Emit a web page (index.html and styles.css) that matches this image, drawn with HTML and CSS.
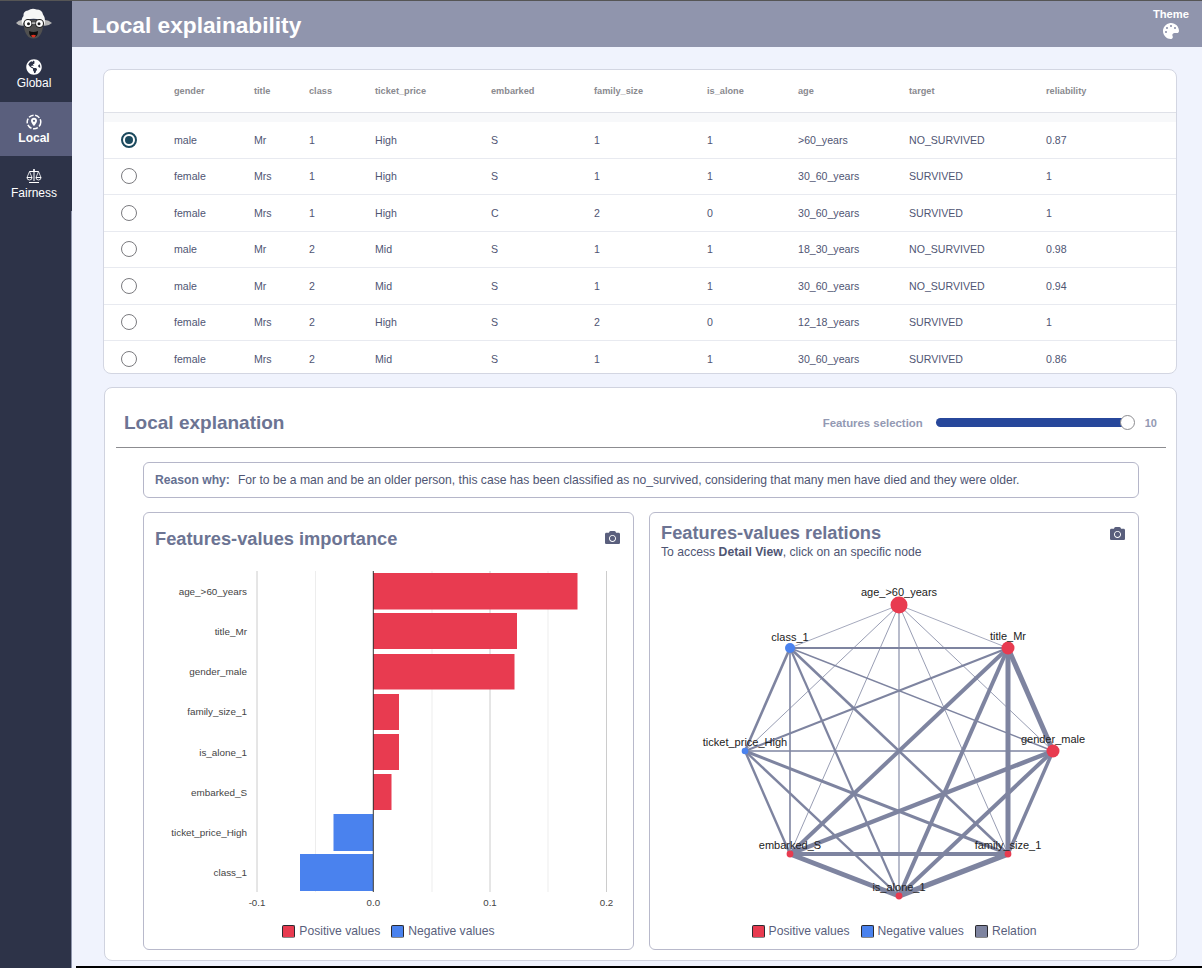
FILE: index.html
```html
<!DOCTYPE html>
<html lang="en">
<head>
<meta charset="utf-8">
<title>Local explainability</title>
<link rel="stylesheet" href="styles.css">
</head>
<body>
<div class="app">
  <aside class="sidebar">
    <div class="logo">
      <svg width="40" height="34" viewBox="0 0 40 34">
        <path d="M9 13 Q5 12.500 2 16 Q5 19.500 10 18.500 Z" fill="#b5b5b5"/>
        <path d="M30 13 Q34 12.500 38 16 Q34 19.500 29 18.500 Z" fill="#b5b5b5"/>
        <path d="M9.500 13 Q9.500 26 14.500 30 Q19.500 33 24.500 30 Q29.500 26 29.500 13 Z" fill="#505050"/>
        <path d="M8.500 18 Q6.500 12 9.500 9 Q9 4 14 3.500 Q18 0.500 22.500 2.500 Q28 2.500 29 7.500 Q32 11.500 30.500 18 Q29 14 26 13 Q19.500 10.500 13 13 Q10 14 8.500 18 Z" fill="#f6f6f6"/>
        <circle cx="14" cy="16.500" r="4" fill="#fff" stroke="#1d1d1d" stroke-width="1.100"/>
        <circle cx="25.500" cy="16.500" r="4" fill="#fff" stroke="#1d1d1d" stroke-width="1.100"/>
        <rect x="18" y="15.500" width="3.500" height="1.200" fill="#e6e6e6"/>
        <circle cx="14.500" cy="16.800" r="1.500" fill="#1d1d1d"/>
        <circle cx="25" cy="16.800" r="1.500" fill="#1d1d1d"/>
        <path d="M15 24 Q19.500 26 24 24 Q24 30 19.500 30 Q15 30 15 24 Z" fill="#0f0f0f"/>
        <path d="M17 28.500 Q19.500 26.800 22 28.500 Q21 30.500 19.500 30.500 Q18 30.500 17 28.500 Z" fill="#e0301e"/>
      </svg>
    </div>
    <nav class="nav">
      <a class="nav-item">
        <svg class="nav-icon" width="16" height="16" viewBox="0 0 496 512"><path fill="#fff" d="M248 8C111.03 8 0 119.03 0 256s111.03 248 248 248 248-111.03 248-248S384.97 8 248 8zm82.29 357.6c-3.9 3.88-7.99 7.95-11.31 11.28-2.99 3-5.1 6.7-6.17 10.71-1.51 5.66-2.73 11.38-4.77 16.87l-17.39 46.85c-13.76 3-28 4.69-42.65 4.69v-27.38c1.69-12.62-7.64-36.26-22.63-51.25-6-6-9.37-14.14-9.37-22.63v-32.01c0-11.64-6.27-22.34-16.46-27.97-14.37-7.95-34.81-19.06-48.81-26.11-11.48-5.78-22.1-13.14-31.65-21.75l-.8-.72a114.792 114.792 0 0 1-18.06-20.74c-9.38-13.77-24.66-36.42-34.59-51.14 20.47-45.5 57.36-82.04 103.2-101.89l24.01 12.01C203.48 89.74 216 82.01 216 70.11v-11.3c7.99-1.29 16.12-2.11 24.39-2.42l28.3 28.3c6.25 6.25 6.25 16.38 0 22.63L264 112l-10.34 10.34c-3.12 3.12-3.12 8.19 0 11.31l4.69 4.69c3.12 3.12 3.12 8.19 0 11.31l-8 8a8.008 8.008 0 0 1-5.66 2.34h-8.99c-2.08 0-4.08.81-5.58 2.27l-9.92 9.65a8.008 8.008 0 0 0-1.58 9.31l15.59 31.19c2.66 5.32-1.21 11.58-7.15 11.58h-5.64c-1.93 0-3.79-.7-5.24-1.96l-9.28-8.06a16.017 16.017 0 0 0-15.55-3.1l-31.17 10.39a11.95 11.95 0 0 0-8.17 11.34c0 4.53 2.56 8.66 6.61 10.69l11.08 5.54c9.41 4.71 19.79 7.16 30.31 7.16s22.59 27.29 32 32h66.75c8.49 0 16.62 3.37 22.63 9.37l13.69 13.69a30.503 30.503 0 0 1 8.93 21.57 46.536 46.536 0 0 1-13.72 32.98zM417 274.25c-5.79-1.45-10.84-5-14.15-9.97l-17.98-26.97a23.97 23.97 0 0 1 0-26.62l19.59-29.38c2.32-3.47 5.5-6.29 9.24-8.15l12.98-6.49C440.2 193.59 448 223.87 448 256c0 8.67-.74 17.16-1.82 25.54L417 274.25z"/></svg>
        <span>Global</span>
      </a>
      <a class="nav-item nav-item-active">
        <svg class="nav-icon" width="16" height="16" viewBox="0 0 16 16">
          <circle cx="8" cy="8" r="6.800" fill="none" stroke="#fff" stroke-width="1.500" stroke-dasharray="5 1.600"/>
          <path fill="#fff" d="M8 3.800c-1.800 0-3 1.300-3 2.900 0 2 3 5.300 3 5.300s3-3.300 3-5.300c0-1.600-1.200-2.900-3-2.900z"/>
          <circle cx="8" cy="6.800" r="1.100" fill="#5a5f7d"/>
        </svg>
        <span>Local</span>
      </a>
      <a class="nav-item nav-item-last">
        <svg class="nav-icon" width="16" height="16" viewBox="0 0 16 16" fill="none" stroke="#fff" stroke-width="1">
          <path d="M8 1.500V13M3 14.500h10M3.500 3.500h9"/>
          <circle cx="8" cy="2" r="1" fill="#fff" stroke="none"/>
          <path d="M3.500 3.500L1 9.500h5zM12.500 3.500L10 9.500h5z" stroke-width=".8"/>
          <path d="M1 9.500a2.500 2.500 0 0 0 5 0zM10 9.500a2.500 2.500 0 0 0 5 0z" stroke-width=".9"/>
        </svg>
        <span>Fairness</span>
      </a>
    </nav>
  </aside>

  <main class="main">
    <header class="topbar">
      <h1 class="page-title">Local explainability</h1>
      <div class="theme">
        <span>Theme</span>
        <svg width="16" height="16" viewBox="0 0 512 512"><path fill="#fff" d="M204.3 5C104.9 24.4 24.8 104.3 5.2 203.4c-37 187 131.7 326.4 258.8 306.7 41.2-6.4 61.4-54.6 42.5-91.7-23.1-45.4 9.9-98.4 60.9-98.4h79.7c35.8 0 64.8-29.6 64.9-65.3C511.5 97.1 368.1-26.9 204.3 5zM96 320c-17.7 0-32-14.3-32-32s14.3-32 32-32 32 14.3 32 32-14.3 32-32 32zm32-128c-17.7 0-32-14.3-32-32s14.3-32 32-32 32 14.3 32 32-14.3 32-32 32zm128-64c-17.7 0-32-14.3-32-32s14.3-32 32-32 32 14.3 32 32-14.3 32-32 32zm128 64c-17.7 0-32-14.3-32-32s14.3-32 32-32 32 14.3 32 32-14.3 32-32 32z"/></svg>
      </div>
    </header>

    <div class="content">
      <section class="table-card">
        <div class="row row-head">
          <span></span><span>gender</span><span>title</span><span>class</span><span>ticket_price</span><span>embarked</span><span>family_size</span><span>is_alone</span><span>age</span><span>target</span><span>reliability</span>
        </div>
        <div class="strip"></div>
        <div class="row"><span class="radio radio-on"></span><span>male</span><span>Mr</span><span>1</span><span>High</span><span>S</span><span>1</span><span>1</span><span>&gt;60_years</span><span>NO_SURVIVED</span><span>0.87</span></div>
        <div class="row"><span class="radio"></span><span>female</span><span>Mrs</span><span>1</span><span>High</span><span>S</span><span>1</span><span>1</span><span>30_60_years</span><span>SURVIVED</span><span>1</span></div>
        <div class="row"><span class="radio"></span><span>female</span><span>Mrs</span><span>1</span><span>High</span><span>C</span><span>2</span><span>0</span><span>30_60_years</span><span>SURVIVED</span><span>1</span></div>
        <div class="row"><span class="radio"></span><span>male</span><span>Mr</span><span>2</span><span>Mid</span><span>S</span><span>1</span><span>1</span><span>18_30_years</span><span>NO_SURVIVED</span><span>0.98</span></div>
        <div class="row"><span class="radio"></span><span>male</span><span>Mr</span><span>2</span><span>Mid</span><span>S</span><span>1</span><span>1</span><span>30_60_years</span><span>NO_SURVIVED</span><span>0.94</span></div>
        <div class="row"><span class="radio"></span><span>female</span><span>Mrs</span><span>2</span><span>High</span><span>S</span><span>2</span><span>0</span><span>12_18_years</span><span>SURVIVED</span><span>1</span></div>
        <div class="row"><span class="radio"></span><span>female</span><span>Mrs</span><span>2</span><span>Mid</span><span>S</span><span>1</span><span>1</span><span>30_60_years</span><span>SURVIVED</span><span>0.86</span></div>
      </section>

      <section class="explain-card">
        <div class="explain-head">
          <h2 class="explain-title">Local explanation</h2>
          <div class="slider-group">
            <span class="slider-label">Features selection</span>
            <div class="slider"><div class="slider-thumb"></div></div>
            <span class="slider-value">10</span>
          </div>
        </div>
        <div class="explain-body">
          <p class="reason"><b class="reason-lead">Reason why:</b>For to be a man and be an older person, this case has been classified as no_survived, considering that many men have died and they were older.</p>
          <div class="panels">
            <article class="panel">
              <div class="panel-head panel-head-left">
                <h3 class="panel-title">Features-values importance</h3>
                <svg class="camera" width="15" height="15" viewBox="0 0 512 512"><path d="M512 144v288c0 26.5-21.5 48-48 48H48c-26.5 0-48-21.5-48-48V144c0-26.5 21.5-48 48-48h88l12.3-32.9c7-18.7 24.9-31.1 44.9-31.1h125.5c20 0 37.9 12.4 44.9 31.1L376 96h88c26.5 0 48 21.5 48 48zM376 288c0-66.2-53.8-120-120-120s-120 53.8-120 120 53.8 120 120 120 120-53.8 120-120zm-32 0c0 48.5-39.5 88-88 88s-88-39.5-88-88 39.5-88 88-88 88 39.5 88 88z"/></svg>
              </div>
              <svg class="chart" width="489" height="356" viewBox="144 561 489 356">
                <g class="grid-minor"><path d="M315.500 571V892M432 571V892M548 571V892"/></g>
                <g class="grid-major"><path d="M257 571V892M490 571V892M606.500 571V892"/></g>
                <g class="bar-pos">
                  <rect x="373" y="573" width="204.500" height="36.500"/>
                  <rect x="373" y="613" width="144" height="36"/>
                  <rect x="373" y="654" width="141.500" height="35.500"/>
                  <rect x="373" y="694" width="26" height="36"/>
                  <rect x="373" y="734" width="26" height="36"/>
                  <rect x="373" y="774" width="18.500" height="36"/>
                </g>
                <g class="bar-neg">
                  <rect x="333.500" y="814" width="39.500" height="37"/>
                  <rect x="300" y="854" width="73" height="37"/>
                </g>
                <path class="axis" d="M373.300 571V892"/>
                <g class="bar-label">
                  <text x="247" y="594.500">age_&gt;60_years</text>
                  <text x="247" y="634.500">title_Mr</text>
                  <text x="247" y="674.500">gender_male</text>
                  <text x="247" y="714.500">family_size_1</text>
                  <text x="247" y="755.500">is_alone_1</text>
                  <text x="247" y="795.500">embarked_S</text>
                  <text x="247" y="835.500">ticket_price_High</text>
                  <text x="247" y="875.500">class_1</text>
                </g>
                <g class="tick-label">
                  <text x="257" y="906">-0.1</text>
                  <text x="373.300" y="906">0.0</text>
                  <text x="490" y="906">0.1</text>
                  <text x="606.500" y="906">0.2</text>
                </g>
              </svg>
              <div class="legend">
                <span class="legend-item"><i class="swatch swatch-pos"></i>Positive values</span>
                <span class="legend-item"><i class="swatch swatch-neg"></i>Negative values</span>
              </div>
            </article>

            <article class="panel">
              <div class="panel-head panel-head-right">
                <div>
                  <h3 class="panel-title">Features-values relations</h3>
                  <p class="panel-sub">To access <b>Detail View</b>, click on an specific node</p>
                </div>
                <svg class="camera" width="15" height="15" viewBox="0 0 512 512"><path d="M512 144v288c0 26.5-21.5 48-48 48H48c-26.5 0-48-21.5-48-48V144c0-26.5 21.5-48 48-48h88l12.3-32.9c7-18.7 24.9-31.1 44.9-31.1h125.5c20 0 37.9 12.4 44.9 31.1L376 96h88c26.5 0 48 21.5 48 48zM376 288c0-66.2-53.8-120-120-120s-120 53.8-120 120 53.8 120 120 120 120-53.8 120-120zm-32 0c0 48.5-39.5 88-88 88s-88-39.5-88-88 39.5-88 88-88 88 39.5 88 88z"/></svg>
              </div>
              <svg class="chart" width="488" height="356" viewBox="650 561 488 356">
                <g class="edge">
                  <line x1="899" y1="605" x2="1008" y2="648" stroke-width=".7"/>
                  <line x1="899" y1="605" x2="790" y2="648" stroke-width=".7"/>
                  <line x1="899" y1="605" x2="1053" y2="751" stroke-width=".8"/>
                  <line x1="899" y1="605" x2="1008" y2="854" stroke-width=".8"/>
                  <line x1="899" y1="605" x2="899" y2="896" stroke-width="1.100"/>
                  <line x1="899" y1="605" x2="790" y2="854" stroke-width=".8"/>
                  <line x1="899" y1="605" x2="745" y2="751" stroke-width=".8"/>
                  <line x1="790" y1="648" x2="1008" y2="648" stroke-width="2.200"/>
                  <line x1="790" y1="648" x2="745" y2="751" stroke-width="2.600"/>
                  <line x1="790" y1="648" x2="790" y2="854" stroke-width="1.600"/>
                  <line x1="790" y1="648" x2="899" y2="896" stroke-width="2.200"/>
                  <line x1="790" y1="648" x2="1008" y2="854" stroke-width="2.600"/>
                  <line x1="790" y1="648" x2="1053" y2="751" stroke-width="1.400"/>
                  <line x1="1008" y1="648" x2="1053" y2="751" stroke-width="5"/>
                  <line x1="1008" y1="648" x2="1008" y2="854" stroke-width="5"/>
                  <line x1="1008" y1="648" x2="899" y2="896" stroke-width="4"/>
                  <line x1="1008" y1="648" x2="790" y2="854" stroke-width="4"/>
                  <line x1="1008" y1="648" x2="745" y2="751" stroke-width="2.200"/>
                  <line x1="1053" y1="751" x2="1008" y2="854" stroke-width="3.500"/>
                  <line x1="1053" y1="751" x2="899" y2="896" stroke-width="4"/>
                  <line x1="1053" y1="751" x2="790" y2="854" stroke-width="4.500"/>
                  <line x1="1053" y1="751" x2="745" y2="751" stroke-width="1.600"/>
                  <line x1="745" y1="751" x2="1008" y2="854" stroke-width="3"/>
                  <line x1="745" y1="751" x2="899" y2="896" stroke-width="2.400"/>
                  <line x1="745" y1="751" x2="790" y2="854" stroke-width="2.400"/>
                  <line x1="1008" y1="854" x2="899" y2="896" stroke-width="5.500"/>
                  <line x1="1008" y1="854" x2="790" y2="854" stroke-width="4"/>
                  <line x1="899" y1="896" x2="790" y2="854" stroke-width="5"/>
                </g>
                <g class="node-pos">
                  <circle cx="899" cy="605" r="8.500"/>
                  <circle cx="1008" cy="648" r="6.500"/>
                  <circle cx="1053" cy="751" r="6.500"/>
                  <circle cx="1008" cy="854" r="3.400"/>
                  <circle cx="899" cy="896" r="3.400"/>
                  <circle cx="790" cy="854" r="3.400"/>
                </g>
                <g class="node-neg">
                  <circle cx="745" cy="751" r="3.300"/>
                  <circle cx="790" cy="648" r="5"/>
                </g>
                <g class="node-label">
                  <text x="899" y="596">age_&gt;60_years</text>
                  <text x="1008" y="640">title_Mr</text>
                  <text x="1053" y="743">gender_male</text>
                  <text x="1008" y="849">family_size_1</text>
                  <text x="899" y="891">is_alone_1</text>
                  <text x="790" y="849">embarked_S</text>
                  <text x="745" y="746">ticket_price_High</text>
                  <text x="790" y="641">class_1</text>
                </g>
              </svg>
              <div class="legend">
                <span class="legend-item"><i class="swatch swatch-pos"></i>Positive values</span>
                <span class="legend-item"><i class="swatch swatch-neg"></i>Negative values</span>
                <span class="legend-item"><i class="swatch swatch-rel"></i>Relation</span>
              </div>
            </article>
          </div>
        </div>
      </section>
    </div>
    <div class="footer-strip"></div>
  </main>
</div>
</body>
</html>
```

FILE: styles.css
```css
* { box-sizing: border-box; }
html, body { margin: 0; padding: 0; height: 100%; }
body {
  font-family: "Liberation Sans", Arial, sans-serif;
  background: #f0f3fd;
  color: #4f5573;
  overflow: hidden;
}
h1, h2, h3, p { margin: 0; }

.app {
  display: flex;
  height: 968px;
  border-top: 1px solid #555;
}

/* Sidebar */
.sidebar {
  flex: 0 0 72px;
  background: #2d3348;
  border-right: 1px solid #8e94ab;
}
.logo {
  height: 46px;
  margin-right: -1px;
  padding: 6px 4px 0 0;
  background: #2d3348;
  display: flex;
  justify-content: center;
  align-items: flex-start;
}
.nav { margin-right: -1px; background: #2d3348; }
.nav-item {
  display: flex;
  flex-direction: column;
  align-items: center;
  height: 54.5px;
  padding: 12px 4px 0 0;
  color: #fff;
  font-size: 12px;
  line-height: 14px;
}
.nav-icon { display: block; margin-bottom: 1px; }
.nav-item-last .nav-icon { margin-bottom: 2px; }
.nav-item-active {
  background: #5a5f7d;
  font-weight: 700;
}

/* Main */
.main {
  flex: 1;
  min-width: 0;
  display: flex;
  flex-direction: column;
}
.topbar {
  flex: 0 0 46px;
  background: #9095ad;
  color: #fff;
  display: flex;
  justify-content: space-between;
  align-items: center;
  padding: 2px 13px 0 20px;
}
.page-title {
  font-size: 22.7px;
  font-weight: 700;
  line-height: 44px;
}
.theme {
  display: flex;
  flex-direction: column;
  align-items: center;
  font-size: 11.2px;
  font-weight: 700;
  line-height: 13px;
  margin-top: -3px;
}
.theme svg { margin-top: 2px; }

.content {
  flex: 1;
  min-height: 0;
  padding: 22px 25px 0 31px;
}

/* Table */
.table-card {
  height: 305px;
  background: #fff;
  border: 1px solid #d3d6e2;
  border-radius: 8px;
  overflow: hidden;
}
.row {
  display: grid;
  grid-template-columns: 70px 80px 55px 66px 116px 103px 113px 91px 111px 137px 1fr;
  align-items: center;
  height: 36.5px;
  font-size: 10.6px;
  color: #4f5573;
  border-bottom: 1px solid #e8eaf0;
}
.row-head {
  height: 43px;
  font-size: 9.2px;
  font-weight: 700;
  color: #8a8a8f;
  border-bottom: 1px solid #dfe1e8;
}
.strip {
  height: 9px;
  background: #f7f8fa;
}
.radio {
  display: block;
  width: 16px;
  height: 16px;
  margin-left: 17px;
  border: 1.5px solid #7b7b7f;
  border-radius: 50%;
  background: #fff;
  position: relative;
}
.radio-on { border-color: #1c4a5e; border-width: 2px; }
.radio-on::after {
  content: "";
  position: absolute;
  inset: 2px;
  border-radius: 50%;
  background: #1c4a5e;
}

/* Explanation card */
.explain-card {
  height: 574px;
  margin: 13px 0 0 1px;
  background: #fff;
  border: 1px solid #d0d3df;
  border-radius: 8px;
  padding: 0 10px 0 11px;
}
.explain-head {
  height: 60px;
  display: flex;
  justify-content: space-between;
  align-items: center;
  padding: 10px 9px 0 8px;
  border-bottom: 1px solid #8c8c90;
}
.explain-title {
  font-size: 19px;
  font-weight: 700;
  color: #6c7493;
}
.slider-group {
  display: flex;
  align-items: center;
}
.slider-label {
  font-size: 11.4px;
  font-weight: 700;
  color: #9399b3;
  margin-right: 13px;
}
.slider {
  position: relative;
  width: 192px;
  height: 9px;
  background: #27479b;
  border-radius: 5px 0 0 5px;
  margin-right: 17px;
}
.slider-thumb {
  position: absolute;
  right: -7.5px;
  top: -3px;
  width: 15px;
  height: 15px;
  background: #fff;
  border: 1px solid #8c8c90;
  border-radius: 50%;
}
.slider-value {
  font-size: 11px;
  font-weight: 700;
  color: #9399b3;
}
.explain-body { padding: 14px 27px 0 27px; }
.reason {
  height: 36px;
  line-height: 34px;
  padding: 0 11px;
  border: 1px solid #b5b6c9;
  border-radius: 6px;
  font-size: 12.15px;
  color: #4f5573;
}
.reason-lead {
  color: #667091;
  margin-right: 8px;
}
.panels {
  display: grid;
  grid-template-columns: 491px 490px;
  column-gap: 15px;
  margin-top: 14px;
}
.panel {
  height: 438px;
  border: 1px solid #b8b9cb;
  border-radius: 6px;
}
.panel-head {
  height: 48px;
  display: flex;
  justify-content: space-between;
  align-items: flex-start;
  padding: 0 13px 0 11px;
}
.panel-head-left { padding-top: 15px; }
.panel-head-right { padding-top: 9px; }
.panel-head .camera { margin-top: 2px; }
.panel-head-right .camera { margin-top: 4px; }
.panel-title {
  font-size: 18.25px;
  line-height: 22px;
  font-weight: 700;
  color: #6c7493;
}
.panel-sub {
  font-size: 12.2px;
  line-height: 14px;
  margin-top: 1px;
  color: #4f5573;
}
.camera { fill: #5a5f7d; flex: none; }
.chart { display: block; }

.grid-minor path { stroke: #ededed; stroke-width: 1; fill: none; }
.grid-major path { stroke: #cccccc; stroke-width: 1; fill: none; }
.bar-pos rect { fill: #e83b50; }
.bar-neg rect { fill: #4a82ee; }
.axis { stroke: #333; stroke-width: 1; fill: none; }
.bar-label text {
  font-size: 9.9px;
  fill: #444;
  text-anchor: end;
}
.tick-label text {
  font-size: 9.7px;
  fill: #444;
  text-anchor: middle;
}
.edge line { stroke: #7e84a0; }
.node-pos circle { fill: #e83b50; }
.node-neg circle { fill: #4a82ee; }
.node-label text {
  font-size: 11px;
  fill: #222;
  text-anchor: middle;
}

.legend {
  display: flex;
  justify-content: center;
  gap: 11px;
  height: 20px;
  margin-top: 4px;
  font-size: 12.15px;
  line-height: 20px;
  color: #5a5f7d;
}
.legend-item { display: flex; align-items: center; gap: 4px; }
.swatch {
  display: block;
  width: 13px;
  height: 13px;
  border: 1px solid #2a2a30;
  border-bottom-color: #888;
  border-radius: 2px;
}
.swatch-pos { background: #e83b50; }
.swatch-neg { background: #4a82ee; }
.swatch-rel { background: #7e84a0; }

.footer-strip {
  flex: 0 0 2px;
  margin-left: 4px;
  background: #000;
}
```
